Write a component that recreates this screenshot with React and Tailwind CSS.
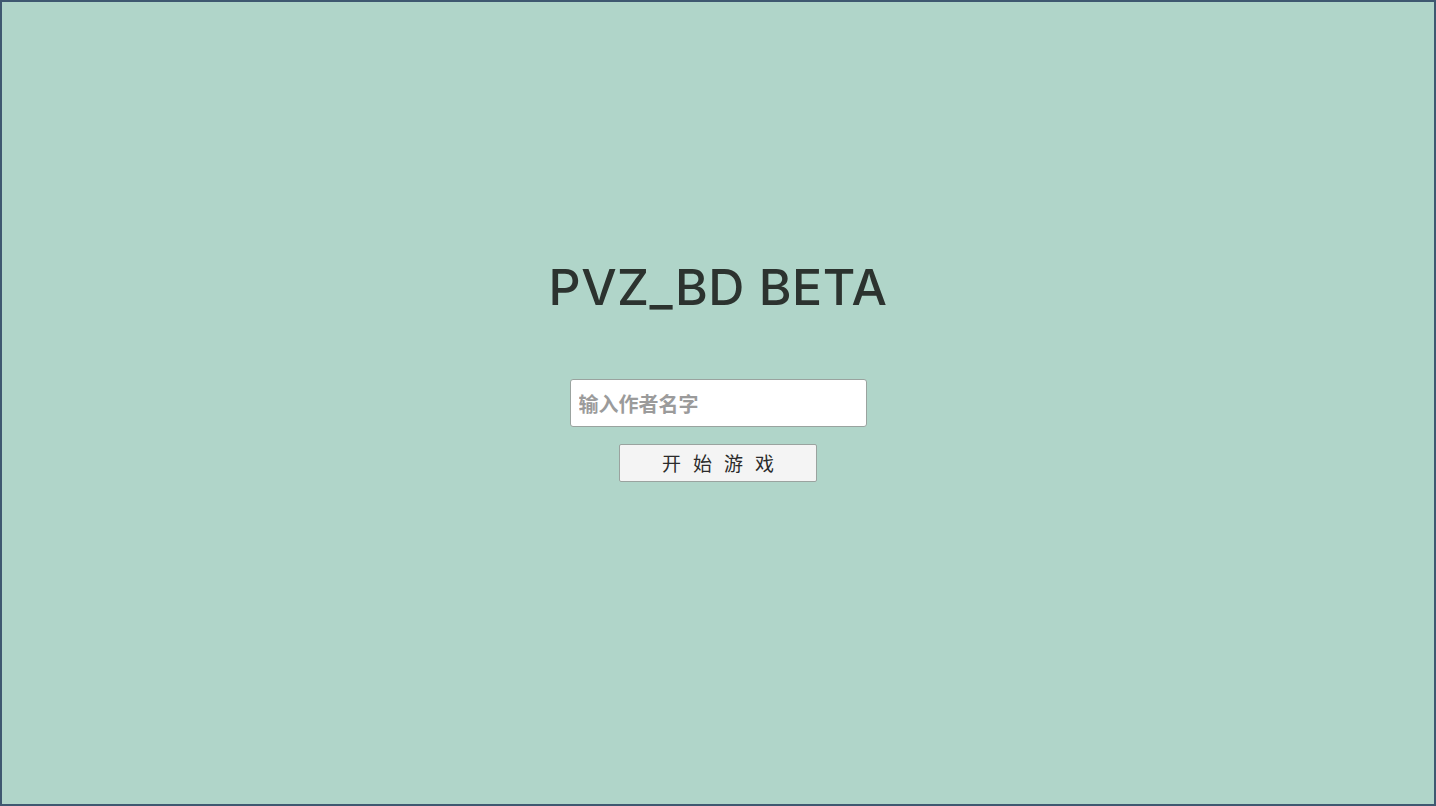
export default function App() {
    return (
        <div className="w-[1436px] h-[806px] bg-[#b0d5c9] border-2 border-[#3e5870] flex flex-col items-center font-['Noto_Sans','Noto_Sans_CJK_SC',sans-serif]">
            <h1 className="mt-[253px] text-[50px] leading-[64px] font-medium text-[#2c332f] font-[Inter,sans-serif] tracking-[0.5px]">
                PVZ_BD BETA
            </h1>
            <input
                type="text"
                placeholder="输入作者名字"
                className="mt-[60px] w-[297px] h-[48px] bg-white border border-[#9aa39f] rounded-[3px] px-[8px] text-[20px] font-bold text-[#333] placeholder:text-[#9b9b9b] outline-none font-['Noto_Sans_CJK_SC',sans-serif]"
            />
            <button className="mt-[17px] w-[198px] h-[38px] bg-[#f4f4f4] border border-[#9aa39f] rounded-[2px] text-[19px] text-[#2b2b2b] tracking-[12px] pl-[12px] font-['Noto_Sans_CJK_SC',sans-serif]">
                开始游戏
            </button>
        </div>
    );
}
